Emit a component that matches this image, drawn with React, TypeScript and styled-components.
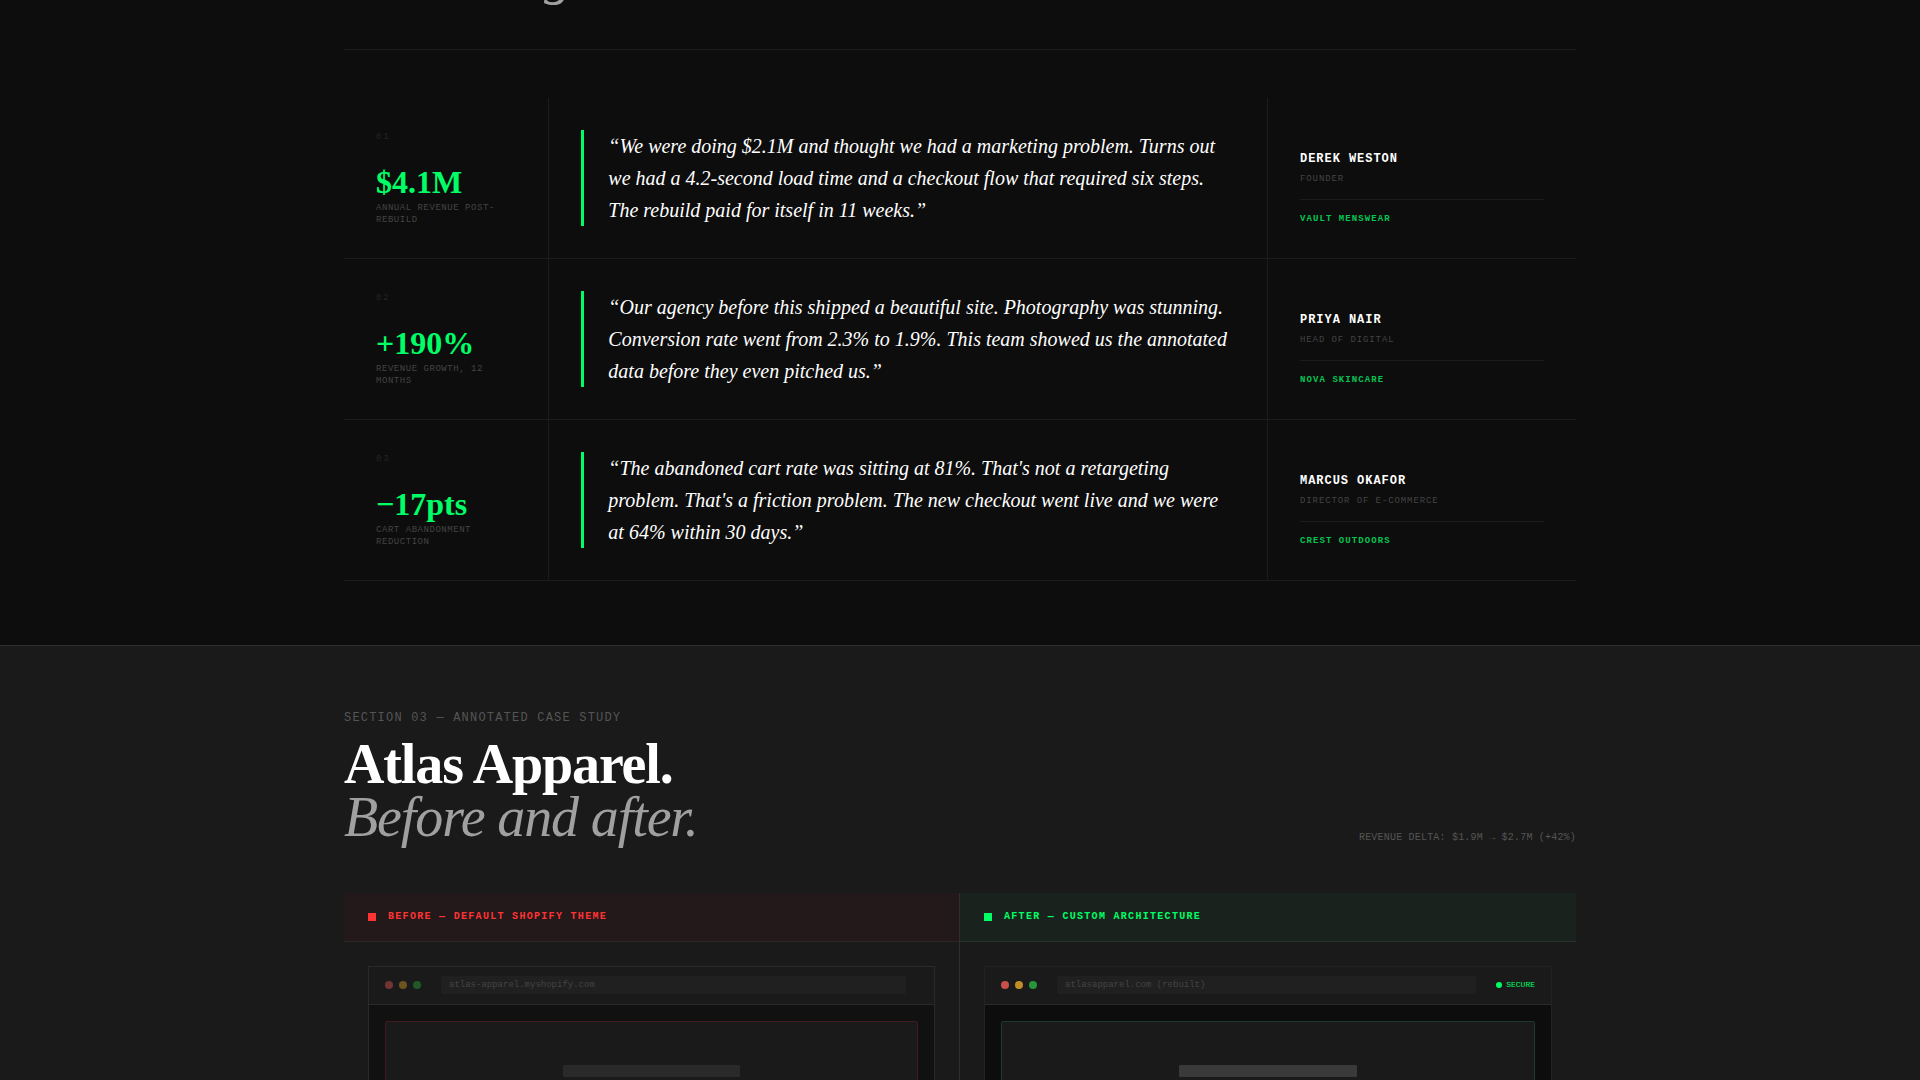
import React from 'react';
import styled, { createGlobalStyle } from 'styled-components';

const serif = '"Liberation Serif", "Times New Roman", serif';
const mono = '"Liberation Mono", "Courier New", monospace';

const color = {
  ink: '#0d0d0d',
  panel: '#1a1a1a',
  line: '#1c1c1c',
  rule: '#2e2e2e',
  white: '#ffffff',
  grey: '#a0a0a0',
  dim: '#555555',
  faint: '#444444',
  ghost: '#242424',
  green: '#00ff66',
  red: '#ff3333',
};

const GlobalStyle = createGlobalStyle`
  *, *::before, *::after { box-sizing: border-box; }
  body { margin: 0; background: ${color.ink}; color: ${color.white}; font-family: ${serif}; }
  h2, h3, p, blockquote { margin: 0; }
`;

const Page = styled.main`
  display: flex;
  flex-direction: column;
  height: 100vh;
  overflow: hidden;
`;

const Section = styled.section<{ $raised?: boolean }>`
  flex-shrink: 0;
  padding: ${p => (p.$raised ? '64px 24px' : '0 24px 64px')};
  background: ${p => (p.$raised ? color.panel : color.ink)};
  border-top: ${p => (p.$raised ? `1px solid ${color.rule}` : '0')};
`;

const Container = styled.div`
  max-width: 1232px;
  margin: 0 auto;
`;

const Title = styled.h2`
  font-size: 56px;
  font-weight: 700;
  line-height: 53px;
  letter-spacing: -0.02em;

  em {
    display: block;
    font-weight: 400;
    color: ${color.grey};
  }
`;

const ScrolledHeader = styled.header`
  display: flex;
  align-items: flex-end;
  height: 50px;
  padding-bottom: 48px;
  margin-bottom: 48px;
  overflow: hidden;
  border-bottom: 1px solid ${color.line};
`;

const Row = styled.article`
  display: grid;
  grid-template-columns: 2fr 7fr 3fr;
  border-bottom: 1px solid ${color.line};
`;

const Cell = styled.div<{ $justify: string }>`
  display: flex;
  flex-direction: column;
  justify-content: ${p => p.$justify};
  padding: 32px;
  border-right: 1px solid ${color.line};

  &:last-child { border-right: 0; }
`;

const Index = styled.span`
  font: 9px/14px ${mono};
  letter-spacing: 0.2em;
  color: ${color.ghost};
`;

const Stat = styled.p`
  font-size: 32px;
  font-weight: 700;
  line-height: 32px;
  color: ${color.green};
`;

const StatLabel = styled.p`
  margin-top: 4px;
  font: 9px/12px ${mono};
  letter-spacing: 0.06em;
  text-transform: uppercase;
  color: ${color.faint};
`;

const Quote = styled.blockquote`
  padding-left: 24px;
  border-left: 3px solid ${color.green};
  font-size: 20px;
  font-style: italic;
  line-height: 32px;
`;

const Name = styled.p`
  margin-bottom: 4px;
  font: 700 12px/18px ${mono};
  letter-spacing: 0.08em;
  text-transform: uppercase;
`;

const Role = styled.p`
  font: 9px/15px ${mono};
  letter-spacing: 0.1em;
  text-transform: uppercase;
  color: ${color.faint};
`;

const Company = styled.p`
  margin-top: 12px;
  padding-top: 12px;
  border-top: 1px solid ${color.line};
  font: 700 9px/14px ${mono};
  letter-spacing: 0.12em;
  text-transform: uppercase;
  color: #06c553;
`;

const StudyHeader = styled.header`
  display: flex;
  justify-content: space-between;
  align-items: flex-end;
  margin-bottom: 49px;
`;

const Eyebrow = styled.p`
  margin-bottom: 12px;
  font: 12px/16px ${mono};
  letter-spacing: 0.1em;
  text-transform: uppercase;
  color: ${color.dim};
`;

const Delta = styled.p`
  font: 10px/12px ${mono};
  letter-spacing: 0.02em;
  text-transform: uppercase;
  color: ${color.dim};
`;

const Compare = styled.div`
  display: grid;
  grid-template-columns: 1fr 1fr;
`;

const Side = styled.div`
  border-right: 1px solid ${color.rule};

  &:last-child { border-right: 0; }
`;

type Tone = 'before' | 'after';

const tones = {
  before: { text: color.red, bar: '#23191a', rule: '#2b2725', frame: '#2a2a2a', body: '#111111', hero: '#41191f', block: '#2a2a2a' },
  after: { text: color.green, bar: '#19221d', rule: '#26332c', frame: '#222222', body: '#0d0d0d', hero: '#1d3a2e', block: '#3a3a3a' },
};

const SideTitle = styled.h3<{ $tone: Tone }>`
  display: flex;
  align-items: center;
  gap: 12px;
  padding: 16px 24px;
  background: ${p => tones[p.$tone].bar};
  border-bottom: 1px solid ${p => tones[p.$tone].rule};
  font: 700 10px/16px ${mono};
  letter-spacing: 0.13em;
  text-transform: uppercase;
  color: ${p => tones[p.$tone].text};

  &::before {
    content: '';
    width: 8px;
    height: 8px;
    background: currentColor;
  }
`;

const Stage = styled.div`
  padding: 24px;
`;

const Browser = styled.div<{ $tone: Tone }>`
  border: 1px solid ${p => tones[p.$tone].frame};
  background: ${p => tones[p.$tone].body};
`;

const Chrome = styled.div`
  display: flex;
  align-items: center;
  gap: 8px;
  padding: 9px 16px 10px;
  background: ${color.panel};
  border-bottom: 1px solid #2a2a2a;
`;

const Lights = styled.div<{ $muted: boolean }>`
  display: flex;
  gap: 6px;
  opacity: ${p => (p.$muted ? 0.5 : 1)};
`;

const Light = styled.span<{ $fill: string }>`
  width: 8px;
  height: 8px;
  border-radius: 50%;
  background: ${p => p.$fill};
`;

const Address = styled.span`
  flex: 1;
  min-width: 0;
  margin: 0 12px;
  padding: 0 8px;
  border-radius: 2px;
  background: #202020;
  font: 9px/18px ${mono};
  color: ${color.faint};
`;

const Secure = styled.span`
  display: flex;
  align-items: center;
  gap: 4px;
  font: 8px/8px ${mono};
  color: ${color.green};

  &::before {
    content: '';
    width: 6px;
    height: 6px;
    border-radius: 50%;
    background: currentColor;
  }
`;

const Viewport = styled.div`
  padding: 16px;
`;

const Hero = styled.div<{ $tone: Tone }>`
  display: flex;
  justify-content: center;
  padding: 43px 0;
  border: 1px solid ${p => tones[p.$tone].hero};
  border-radius: 2px;
  background: ${color.panel};
`;

const Block = styled.div<{ $tone: Tone }>`
  width: calc(100% / 3);
  height: 12px;
  border-radius: 1px;
  background: ${p => tones[p.$tone].block};
`;

const testimonials = [
  {
    stat: '$4.1M',
    label: 'Annual revenue post-rebuild',
    quote: '“We were doing $2.1M and thought we had a marketing problem. Turns out we had a 4.2-second load time and a checkout flow that required six steps. The rebuild paid for itself in 11 weeks.”',
    name: 'Derek Weston',
    role: 'Founder',
    company: 'Vault Menswear',
  },
  {
    stat: '+190%',
    label: 'Revenue growth, 12 months',
    quote: '“Our agency before this shipped a beautiful site. Photography was stunning. Conversion rate went from 2.3% to 1.9%. This team showed us the annotated data before they even pitched us.”',
    name: 'Priya Nair',
    role: 'Head of Digital',
    company: 'Nova Skincare',
  },
  {
    stat: '−17pts',
    label: 'Cart abandonment reduction',
    quote: "“The abandoned cart rate was sitting at 81%. That's not a retargeting problem. That's a friction problem. The new checkout went live and we were at 64% within 30 days.”",
    name: 'Marcus Okafor',
    role: 'Director of E-Commerce',
    company: 'Crest Outdoors',
  },
];

const sides: { tone: Tone; title: string; url: string }[] = [
  { tone: 'before', title: 'Before — Default Shopify Theme', url: 'atlas-apparel.myshopify.com' },
  { tone: 'after', title: 'After — Custom Architecture', url: 'atlasapparel.com (rebuilt)' },
];

const lights = ['#c9504a', '#c08c26', '#27963a'];

export default function App() {
  return (
    <Page>
      <GlobalStyle />
      <Section>
        <Container>
          <ScrolledHeader>
            <Title><em>Not seeing</em></Title>
          </ScrolledHeader>
          {testimonials.map((t, i) => (
            <Row key={t.name}>
              <Cell $justify="space-between">
                <Index>{`0${i + 1}`}</Index>
                <div>
                  <Stat>{t.stat}</Stat>
                  <StatLabel>{t.label}</StatLabel>
                </div>
              </Cell>
              <Cell $justify="center">
                <Quote>{t.quote}</Quote>
              </Cell>
              <Cell $justify="flex-end">
                <Name>{t.name}</Name>
                <Role>{t.role}</Role>
                <Company>{t.company}</Company>
              </Cell>
            </Row>
          ))}
        </Container>
      </Section>
      <Section $raised>
        <Container>
          <StudyHeader>
            <div>
              <Eyebrow>Section 03 — Annotated Case Study</Eyebrow>
              <Title>Atlas Apparel.<em>Before and after.</em></Title>
            </div>
            <Delta>Revenue delta: $1.9M → $2.7M (+42%)</Delta>
          </StudyHeader>
          <Compare>
            {sides.map(s => (
              <Side key={s.tone}>
                <SideTitle $tone={s.tone}>{s.title}</SideTitle>
                <Stage>
                  <Browser $tone={s.tone}>
                    <Chrome>
                      <Lights $muted={s.tone === 'before'}>
                        {lights.map(fill => <Light key={fill} $fill={fill} />)}
                      </Lights>
                      <Address>{s.url}</Address>
                      {s.tone === 'after' && <Secure>SECURE</Secure>}
                    </Chrome>
                    <Viewport>
                      <Hero $tone={s.tone}><Block $tone={s.tone} /></Hero>
                    </Viewport>
                  </Browser>
                </Stage>
              </Side>
            ))}
          </Compare>
        </Container>
      </Section>
    </Page>
  );
}
